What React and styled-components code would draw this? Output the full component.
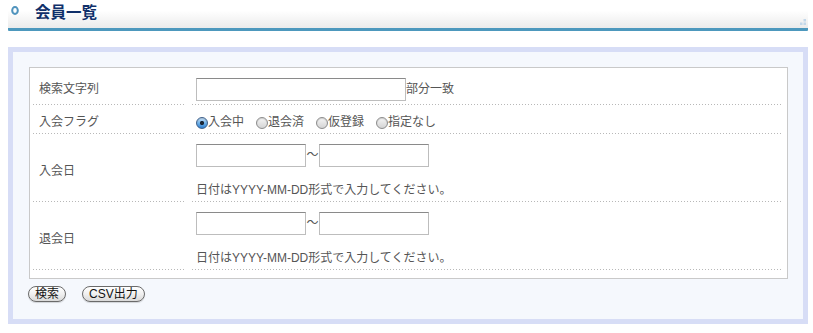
import React, { useState } from 'react';
import styled, { createGlobalStyle } from 'styled-components';

// ─── Design tokens ────────────────────────────────────────
const colors = {
  navy: '#10306a',
  steel: '#4d98bd',
  text: '#555555',
  frame: '#d7ddf6',
  frameBg: '#f5f8fd',
  tableBorder: '#c9c9c9',
  dots: '#b8b8b8',
};

const jpFont = `'Liberation Sans', 'Noto Sans CJK JP', sans-serif`;

const GlobalStyle = createGlobalStyle`
  body {
    margin: 0;
    background: #fff;
    font-family: ${jpFont};
  }
`;

// ─── Page & heading ───────────────────────────────────────
const Page = styled.div`
  width: 800px;
  padding: 0 5px 0 8px;
`;

const Heading = styled.div`
  display: flex;
  align-items: center;
  height: 28px;
  padding: 0 2px 0 3px;
  background: linear-gradient(to bottom, #ffffff 0%, #ffffff 38%, #ebebeb 100%);
  border-bottom: 3px solid ${colors.steel};
  border-radius: 0 0 1px 1px;
`;

const HeadingTitle = styled.h2`
  margin: 0 0 0 16px;
  font-size: 15.5px;
  font-weight: 700;
  color: ${colors.navy};
  line-height: 20px;
  flex: 1;
  padding-bottom: 2px;
`;

const Bullet = styled.svg`
  align-self: flex-start;
  margin-top: 6px;
`;

const Corner = styled.svg`
  align-self: flex-end;
  margin-bottom: 3px;
`;

// ─── Search frame ─────────────────────────────────────────
const Frame = styled.div`
  margin-top: 16px;
  border: 5px solid ${colors.frame};
  background: ${colors.frameBg};
  padding: 15px 15px 17px 16px;
`;

const FormTable = styled.div`
  display: grid;
  grid-template-columns: 152px 1fr;
  column-gap: 7px;
  background: #fff;
  border: 1px solid ${colors.tableBorder};
  padding: 0 6px 8px 3px;
`;

const Cell = styled.div`
  padding: 10px 4px ${({ $pb }) => $pb || 5}px;
  font-size: 12px;
  color: ${colors.text};
  line-height: 15px;
  background-image: repeating-linear-gradient(to right, ${colors.dots} 0 1px, transparent 1px 3px);
  background-size: 100% 1px;
  background-position: bottom left;
  background-repeat: no-repeat;
`;

const LabelCell = styled(Cell)`
  display: flex;
  align-items: center;
  padding-left: 6px;
`;

const InlineRow = styled.div`
  display: flex;
  align-items: center;
  height: 23px;
`;

const TextInput = styled.input`
  box-sizing: border-box;
  width: ${({ $w }) => $w}px;
  height: 23px;
  margin: 0;
  padding: 2px 4px;
  border: 1px solid #bdbdbd;
  border-top-color: #8a8a8a;
  background: #fff;
  font-size: 12px;
  font-family: ${jpFont};
  outline: none;
`;

const Suffix = styled.span`
  font-size: 12px;
  color: ${colors.text};
`;

const Tilde = styled.span`
  width: 13px;
  text-align: center;
  font-size: 12px;
  color: ${colors.text};
`;

const Note = styled.p`
  margin: 16px 0 0;
  font-size: 12px;
  line-height: 15px;
  color: ${colors.text};
`;

// ─── Radios ───────────────────────────────────────────────
const RadioGroup = styled.div`
  display: flex;
  align-items: center;
  gap: 12px;
`;

const RadioLabel = styled.label`
  display: flex;
  align-items: center;
  cursor: pointer;
`;

const Radio = styled.input`
  appearance: none;
  width: 12px;
  height: 12px;
  margin: 0;
  border-radius: 50%;
  border: 1px solid #8c8c8c;
  box-sizing: border-box;
  background: linear-gradient(to bottom, #f6f6f6 0%, #d4d4d4 100%);
  box-shadow: inset 0 1px 1px rgba(0, 0, 0, 0.15);

  &:checked {
    border-color: #3d5f8a;
    background:
      radial-gradient(circle at 50% 50%, #1b2636 0 1.8px, transparent 2.4px),
      linear-gradient(to bottom, #cde6fb 0%, #6aaee8 55%, #2f7fd0 100%);
  }
`;

// ─── Buttons ──────────────────────────────────────────────
const ButtonRow = styled.div`
  display: flex;
  gap: 16px;
  margin-top: 7px;
  margin-left: -1px;
`;

const PillButton = styled.button`
  height: 16px;
  padding: 0 6px;
  border: 1px solid #6a6a6a;
  border-radius: 8px;
  background: linear-gradient(to bottom, #ffffff 0%, #f0f0f0 50%, #d9d9d9 100%);
  font-size: 12px;
  line-height: 14px;
  font-family: ${jpFont};
  color: #111;
  cursor: pointer;
  box-shadow: 0 1px 1px rgba(0, 0, 0, 0.15);
`;

const FLAGS = ['入会中', '退会済', '仮登録', '指定なし'];
const NOTE = '日付はYYYY-MM-DD形式で入力してください。';

function DateRange() {
  return (
    <div>
      <InlineRow>
        <TextInput $w={110} type="text" />
        <Tilde>〜</Tilde>
        <TextInput $w={110} type="text" />
      </InlineRow>
      <Note>{NOTE}</Note>
    </div>
  );
}

export default function App() {
  const [flag, setFlag] = useState('入会中');

  return (
    <Page>
      <GlobalStyle />

      {/* Heading */}
      <Heading>
        <Bullet width="8" height="9" viewBox="0 0 8 9">
          <ellipse cx="4" cy="4.5" rx="2.8" ry="3.4" fill="none" stroke="#4f93bd" strokeWidth="2" />
        </Bullet>
        <HeadingTitle>会員一覧</HeadingTitle>
        <Corner width="6" height="6" viewBox="0 0 6 6">
          <rect x="3.5" y="0" width="2.5" height="2.5" fill="#c3d8ea" />
          <rect x="0" y="3.5" width="2.5" height="2.5" fill="#c3d8ea" />
          <rect x="3.5" y="3.5" width="2.5" height="2.5" fill="#c3d8ea" />
        </Corner>
      </Heading>

      {/* Search form */}
      <Frame>
        <FormTable>
          <LabelCell>検索文字列</LabelCell>
          <Cell $pb={4}>
            <InlineRow>
              <TextInput $w={210} type="text" />
              <Suffix>部分一致</Suffix>
            </InlineRow>
          </Cell>

          <LabelCell $pb={4}>入会フラグ</LabelCell>
          <Cell $pb={4}>
            <RadioGroup>
              {FLAGS.map((f) => (
                <RadioLabel key={f}>
                  <Radio
                    type="radio"
                    name="flag"
                    checked={flag === f}
                    onChange={() => setFlag(f)}
                  />
                  {f}
                </RadioLabel>
              ))}
            </RadioGroup>
          </Cell>

          <LabelCell $pb={4}>入会日</LabelCell>
          <Cell $pb={4}>
            <DateRange />
          </Cell>

          <LabelCell $pb={4}>退会日</LabelCell>
          <Cell $pb={4}>
            <DateRange />
          </Cell>
        </FormTable>

        <ButtonRow>
          <PillButton>検索</PillButton>
          <PillButton>CSV出力</PillButton>
        </ButtonRow>
      </Frame>
    </Page>
  );
}
